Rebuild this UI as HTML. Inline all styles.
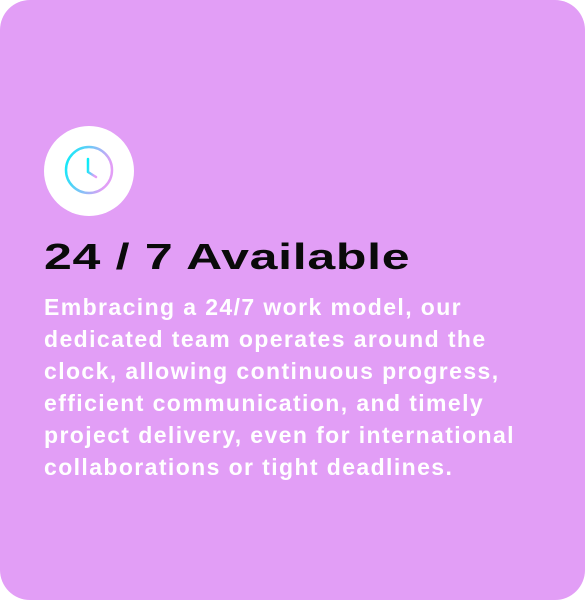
<!DOCTYPE html>
<html><head><style>
html,body{margin:0;padding:0;background:#fff;}
.card{position:absolute;left:0;top:0;width:585px;height:600px;background:#e29ef6;border-radius:30px;overflow:hidden;}
.ic{position:absolute;left:44px;top:126px;width:90px;height:90px;border-radius:50%;background:#fff;}
h1{position:absolute;left:44px;top:237px;margin:0;font:bold 36px/40px "Liberation Sans",sans-serif;color:#0a0a0a;white-space:nowrap;transform:scaleX(1.39);transform-origin:0 0;letter-spacing:0.5px;}
p{position:absolute;left:44px;top:291px;width:540px;margin:0;font:600 23px/32px "Liberation Sans",sans-serif;color:#fff;letter-spacing:1.4px;white-space:nowrap;}
</style></head><body>
<div class="card">
<div class="ic"><svg width="90" height="90" viewBox="0 0 90 90">
<defs><linearGradient id="g" x1="0" y1="0" x2="1" y2="0.3"><stop offset="0" stop-color="#00f0f8"/><stop offset="1" stop-color="#e29ef6"/></linearGradient></defs>
<circle cx="45" cy="44" r="23" fill="none" stroke="url(#g)" stroke-width="2.5"/>
<path d="M44 33 V46 L52 51" fill="none" stroke="url(#g)" stroke-width="2.5" stroke-linecap="round" stroke-linejoin="round"/>
</svg></div>
<h1>24 / 7 Available</h1>
<p>Embracing a 24/7 work model, our<br>dedicated team operates around the<br>clock, allowing continuous progress,<br>efficient communication, and timely<br>project delivery, even for international<br>collaborations or tight deadlines.</p>
</div>
</body></html>
